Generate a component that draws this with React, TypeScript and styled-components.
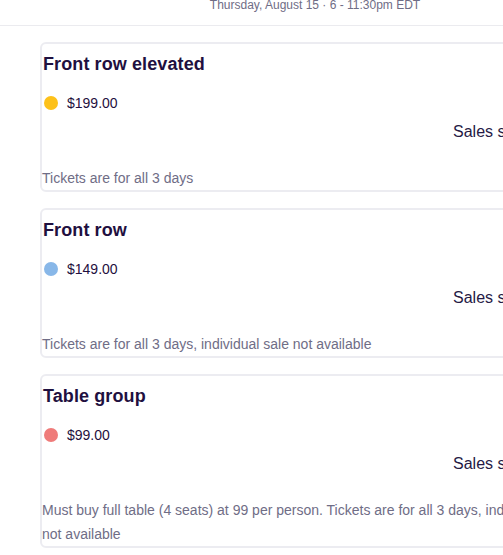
import React from "react"
import styled, { createGlobalStyle } from "styled-components"

const GlobalStyle = createGlobalStyle`
  html, body {
    margin: 0;
    padding: 0;
    background: #ffffff;
    overflow: hidden;
  }
  body {
    font-family: "Liberation Sans", Arial, sans-serif;
  }
`

const Page = styled.div`
  width: 630px;
`

const Header = styled.div`
  height: 25px;
  border-bottom: 1px solid #ebebef;
  display: flex;
  justify-content: center;
  align-items: flex-start;
  overflow: hidden;
`

const HeaderDate = styled.div`
  font-size: 12px;
  line-height: 14px;
  margin-top: -2px;
  color: #6f6d86;
`

const TicketList = styled.div`
  display: flex;
  flex-direction: column;
  gap: 16px;
  padding: 16px 0 0 40px;
`

const Card = styled.div`
  width: 546px;
  border: 2px solid #ececf1;
  border-radius: 6px;
  padding: 8px 0 0 0;
  box-sizing: border-box;
  display: flex;
  flex-direction: column;
`

const Title = styled.div`
  font-size: 18px;
  font-weight: 700;
  line-height: 24px;
  letter-spacing: 0.1px;
  padding-left: 1px;
  color: #1f1040;
`

const PriceRow = styled.div`
  display: flex;
  align-items: center;
  gap: 9px;
  height: 24px;
  margin-top: 15px;
  padding-left: 2px;
`

const Dot = styled.span<{ $color: string }>`
  width: 14px;
  height: 14px;
  border-radius: 50%;
  background: ${(p) => p.$color};
  flex-shrink: 0;
`

const Price = styled.span`
  font-size: 14px;
  color: #1f1040;
`

const SalesRow = styled.div`
  height: 24px;
  margin-top: 5px;
  display: flex;
  align-items: center;
  padding-left: 411px;
  font-size: 16px;
  color: #251a45;
  white-space: nowrap;
`

const Description = styled.div`
  margin-top: 22px;
  font-size: 14px;
  line-height: 24px;
  color: #6f6d86;
`

type Ticket = {
  name: string
  price: string
  color: string
  note: string
}

const TICKETS: Ticket[] = [
  {
    name: "Front row elevated",
    price: "$199.00",
    color: "#fdc11a",
    note: "Tickets are for all 3 days",
  },
  {
    name: "Front row",
    price: "$149.00",
    color: "#88b7e8",
    note: "Tickets are for all 3 days, individual sale not available",
  },
  {
    name: "Table group",
    price: "$99.00",
    color: "#ef7b7a",
    note: "Must buy full table (4 seats) at 99 per person. Tickets are for all 3 days, individual sale not available",
  },
]

const App: React.FC = () => {
  return (
    <Page>
      <GlobalStyle />
      <Header>
        <HeaderDate>Thursday, August 15 · 6 - 11:30pm EDT</HeaderDate>
      </Header>
      <TicketList>
        {TICKETS.map((t) => (
          <Card key={t.name}>
            <Title>{t.name}</Title>
            <PriceRow>
              <Dot $color={t.color} />
              <Price>{t.price}</Price>
            </PriceRow>
            <SalesRow>Sales start soon</SalesRow>
            <Description>{t.note}</Description>
          </Card>
        ))}
      </TicketList>
    </Page>
  )
}

export default App
